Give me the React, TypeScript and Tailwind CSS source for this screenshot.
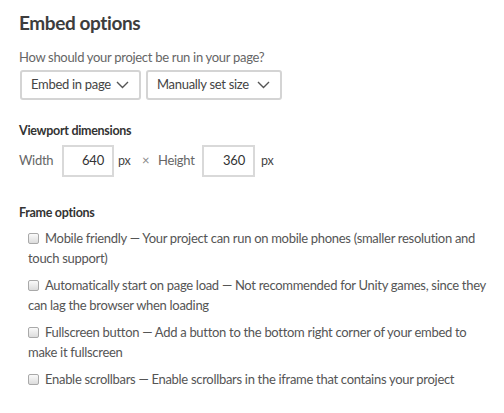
import React from 'react';

const Chevron = () => (
  <svg width="13" height="8" viewBox="0 0 13 8">
    <path d="M1 1l5.5 5.5L12 1" fill="none" stroke="#555" strokeWidth="1.4" />
  </svg>
);

const Select = ({ label, w }: { label: string; w: string }) => (
  <div className={`flex h-[30px] items-center justify-between rounded-[3px] border-2 border-[#d4d4d4] bg-white pl-[9px] pr-[10px] text-[13px] tracking-[-0.3px] text-[#444] ${w}`}>
    <span>{label}</span>
    <Chevron />
  </div>
);

const NumInput = ({ value, w }: { value: string; w: string }) => (
  <div className={`flex h-[32px] items-center justify-end border-2 border-[#d9d9d9] pr-[8px] text-[13px] tracking-[-0.2px] text-[#333] ${w}`}>
    {value}
  </div>
);

const Box = () => (
  <span className="mr-[6px] inline-block h-[11px] w-[11px] rounded-[2px] border border-[#a9a9a9] bg-gradient-to-b from-[#fafafa] to-[#dcdcdc] align-[-1px]" />
);

const options = [
  { title: 'Mobile friendly', desc: 'Your project can run on mobile phones (smaller resolution and touch support)' },
  { title: 'Automatically start on page load', desc: 'Not recommended for Unity games, since they can lag the browser when loading' },
  { title: 'Fullscreen button', desc: 'Add a button to the bottom right corner of your embed to make it fullscreen' },
  { title: 'Enable scrollbars', desc: 'Enable scrollbars in the iframe that contains your project' },
];

export default function App() {
  return (
    <div className="h-[413px] w-[504px] bg-white pl-[19px] pr-[8px] pt-[9px] text-[#555]" style={{ fontFamily: 'Lato, sans-serif' }}>
      <h2 className="text-[19px] font-bold leading-[28px] tracking-[-0.4px] text-[#3d3d3d]">Embed options</h2>

      <p className="mt-[11px] text-[13px] leading-[18px] tracking-[-0.3px] text-[#666]">How should your project be run in your page?</p>
      <div className="mt-[4px] flex gap-[5px] pl-[1px]">
        <Select label="Embed in page" w="w-[121px]" />
        <Select label="Manually set size" w="w-[136px]" />
      </div>

      <h3 className="mt-[23px] text-[12.5px] font-bold leading-[16px] tracking-[-0.3px] text-[#333]">Viewport dimensions</h3>
      <div className="mt-[6px] flex items-center text-[13px] tracking-[-0.3px] text-[#666]">
        <span className="w-[43px]">Width</span>
        <NumInput value="640" w="w-[52px]" />
        <span className="ml-[4px] w-[24px] text-[12.5px] text-[#444]">px</span>
        <span className="w-[16px] text-[13px] text-[#888]">×</span>
        <span className="w-[44px]">Height</span>
        <NumInput value="360" w="w-[53px]" />
        <span className="ml-[6px] text-[12.5px] text-[#444]">px</span>
      </div>

      <h3 className="mt-[28px] text-[12.5px] font-bold leading-[16px] tracking-[-0.3px] text-[#333]">Frame options</h3>
      <div className="mt-[7px] w-[474px] pl-[9px]">
        {options.map((o) => (
          <label key={o.title} className="mb-[7px] block text-[13px] leading-[20px] tracking-[-0.3px] text-[#555]">
            <Box />
            {o.title} — {o.desc}
          </label>
        ))}
      </div>
    </div>
  );
}
